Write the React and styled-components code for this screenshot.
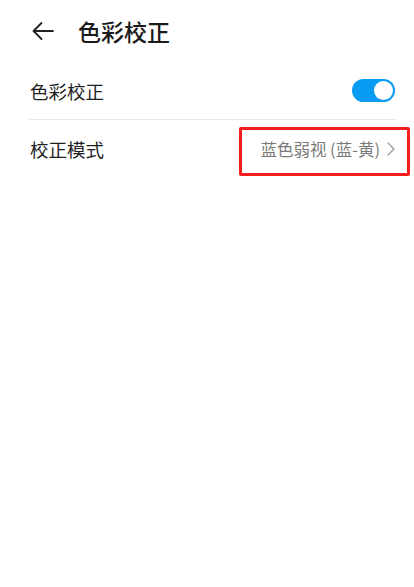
import React, { useState } from 'react'
import styled, { createGlobalStyle } from 'styled-components'

const GlobalStyle = createGlobalStyle`
  body {
    margin: 0;
    background: #fff;
    font-family: "Noto Sans CJK SC", "Noto Sans", sans-serif;
  }
`

const Page = styled.div`
  width: 414px;
  min-height: 587px;
  background: #fff;
`

const Header = styled.div`
  display: flex;
  align-items: center;
  height: 62px;
  padding: 0 32px;
  gap: 24px;
`

const BackButton = styled.button`
  display: flex;
  align-items: center;
  padding: 0;
  border: none;
  background: none;
  width: 22px;
  height: 18px;
`

const Title = styled.h1`
  margin: 0;
  font-size: 23px;
  font-weight: 500;
  color: #1b1b1b;
`

const List = styled.div`
  margin: 0 17px 0 29px;
`

const Row = styled.div`
  display: flex;
  align-items: center;
  justify-content: space-between;
  height: 57px;
  padding: 0 2px 0 1px;
  border-bottom: ${p => (p.divider ? '1px solid #e8e8e8' : 'none')};
`

const Label = styled.span`
  font-size: 18.5px;
  color: #1f1f1f;
`

const Toggle = styled.button`
  position: relative;
  width: 43px;
  height: 23px;
  padding: 0;
  border: none;
  border-radius: 12px;
  background: ${p => (p.on ? '#0a9cf3' : '#d0d0d0')};
  &::after {
    content: '';
    position: absolute;
    top: 2px;
    left: ${p => (p.on ? '22px' : '2px')};
    width: 19px;
    height: 19px;
    border-radius: 50%;
    background: #fff;
  }
`

const Value = styled.div`
  position: relative;
  display: flex;
  align-items: center;
  gap: 7px;
  font-size: 16.5px;
  color: #7a7a7a;
`

const Highlight = styled.span`
  position: absolute;
  left: -21px;
  right: -15px;
  top: -10px;
  bottom: -15px;
  border: 3px solid #f51d1d;
  border-radius: 2px;
  pointer-events: none;
`

export default function App() {
  const [on, setOn] = useState(true)
  return (
    <Page>
      <GlobalStyle />
      <Header>
        <BackButton>
          <svg width="22" height="18" viewBox="0 0 22 18" fill="none" stroke="#222" strokeWidth="1.8" strokeLinecap="round" strokeLinejoin="round">
            <path d="M21 9H1.5M9.5 1L1.5 9l8 8" />
          </svg>
        </BackButton>
        <Title>色彩校正</Title>
      </Header>
      <List>
        <Row divider>
          <Label>色彩校正</Label>
          <Toggle on={on} onClick={() => setOn(!on)} />
        </Row>
        <Row>
          <Label>校正模式</Label>
          <Value>
            <span>蓝色弱视 (蓝-黄)</span>
            <svg width="8" height="14" viewBox="0 0 8 14" fill="none" stroke="#9a9a9a" strokeWidth="1.3" strokeLinecap="round" strokeLinejoin="round">
              <path d="M1 1l6 6-6 6" />
            </svg>
            <Highlight />
          </Value>
        </Row>
      </List>
    </Page>
  )
}
